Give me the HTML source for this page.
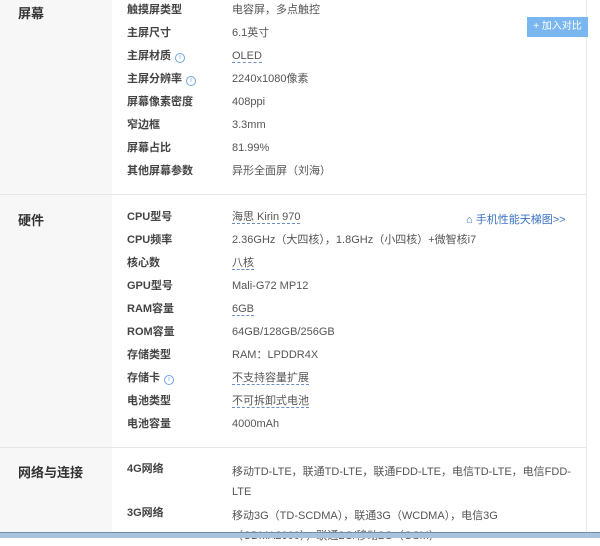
<!DOCTYPE html>
<html><head><meta charset="utf-8"><style>
*{margin:0;padding:0;box-sizing:border-box}
body{width:600px;height:538px;overflow:hidden;background:#fff;font-family:"Liberation Sans","Noto Sans CJK SC",sans-serif;position:relative}
.left{position:absolute;left:0;top:0;width:112px;height:538px;background:#f7f7f7}
.rb{position:absolute;left:586px;top:0;width:1px;height:538px;background:#e8e8e8}
.hl{position:absolute;left:0;width:586px;height:1px;background:#e6e6e6}
.t{position:absolute;left:18px;font-size:13px;font-weight:bold;color:#333}
.l{position:absolute;left:127px;font-size:11px;font-weight:bold;color:#444;line-height:14px}
.v{position:absolute;left:232px;font-size:11px;color:#555;line-height:14px}
.d{border-bottom:1px dashed #6a8fc8}
.i{display:inline-block;width:10px;height:10px;border:1px solid #6ea7e0;border-radius:50%;font-size:7px;color:#6ea7e0;text-align:center;line-height:8px;font-weight:normal;margin-left:4px;vertical-align:0}
.btn{position:absolute;left:527px;top:17px;width:61px;height:20px;background:#7ab6f0;color:#fff;font-size:10px;text-align:center;line-height:20px}
.lk{position:absolute;left:466px;top:211px;font-size:11px;color:#3a72c0}
.tb{position:absolute;left:0;top:532px;width:600px;height:6px;background:#a9c3dc;border-top:1px solid #6f8fae}
</style></head><body>
<div class="left"></div><div class="rb"></div>
<div class="hl" style="top:194px"></div><div class="hl" style="top:447px"></div>
<div class="t" style="top:3px">屏幕</div>
<div class="t" style="top:210px">硬件</div>
<div class="t" style="top:462px">网络与连接</div>
<div class="btn">+ 加入对比</div>
<div class="lk">⌂ 手机性能天梯图&gt;&gt;</div>

<div class="l" style="top:3px">触摸屏类型</div><div class="v" style="top:3px">电容屏，多点触控</div>
<div class="l" style="top:26px">主屏尺寸</div><div class="v" style="top:26px">6.1英寸</div>
<div class="l" style="top:49px">主屏材质<span class="i">i</span></div><div class="v" style="top:49px"><span class="d">OLED</span></div>
<div class="l" style="top:72px">主屏分辨率<span class="i">i</span></div><div class="v" style="top:72px">2240x1080像素</div>
<div class="l" style="top:95px">屏幕像素密度</div><div class="v" style="top:95px">408ppi</div>
<div class="l" style="top:118px">窄边框</div><div class="v" style="top:118px">3.3mm</div>
<div class="l" style="top:141px">屏幕占比</div><div class="v" style="top:141px">81.99%</div>
<div class="l" style="top:164px">其他屏幕参数</div><div class="v" style="top:164px">异形全面屏（刘海）</div>

<div class="l" style="top:210px">CPU型号</div><div class="v" style="top:210px"><span class="d">海思 Kirin 970</span></div>
<div class="l" style="top:233px">CPU频率</div><div class="v" style="top:233px">2.36GHz（大四核），1.8GHz（小四核）+微智核i7</div>
<div class="l" style="top:256px">核心数</div><div class="v" style="top:256px"><span class="d">八核</span></div>
<div class="l" style="top:279px">GPU型号</div><div class="v" style="top:279px">Mali-G72 MP12</div>
<div class="l" style="top:302px">RAM容量</div><div class="v" style="top:302px"><span class="d">6GB</span></div>
<div class="l" style="top:325px">ROM容量</div><div class="v" style="top:325px">64GB/128GB/256GB</div>
<div class="l" style="top:348px">存储类型</div><div class="v" style="top:348px">RAM：LPDDR4X</div>
<div class="l" style="top:371px">存储卡<span class="i">i</span></div><div class="v" style="top:371px"><span class="d">不支持容量扩展</span></div>
<div class="l" style="top:394px">电池类型</div><div class="v" style="top:394px"><span class="d">不可拆卸式电池</span></div>
<div class="l" style="top:417px">电池容量</div><div class="v" style="top:417px">4000mAh</div>

<div class="l" style="top:462px">4G网络</div><div class="v" style="top:462px;line-height:20px;width:340px">移动TD-LTE，联通TD-LTE，联通FDD-LTE，电信TD-LTE，电信FDD-LTE</div>
<div class="l" style="top:506px">3G网络</div><div class="v" style="top:506px;line-height:20px;width:290px">移动3G（TD-SCDMA），联通3G（WCDMA），电信3G（CDMA2000），联通2G/移动2G（GSM）</div>
<div class="tb"></div>
</body></html>
